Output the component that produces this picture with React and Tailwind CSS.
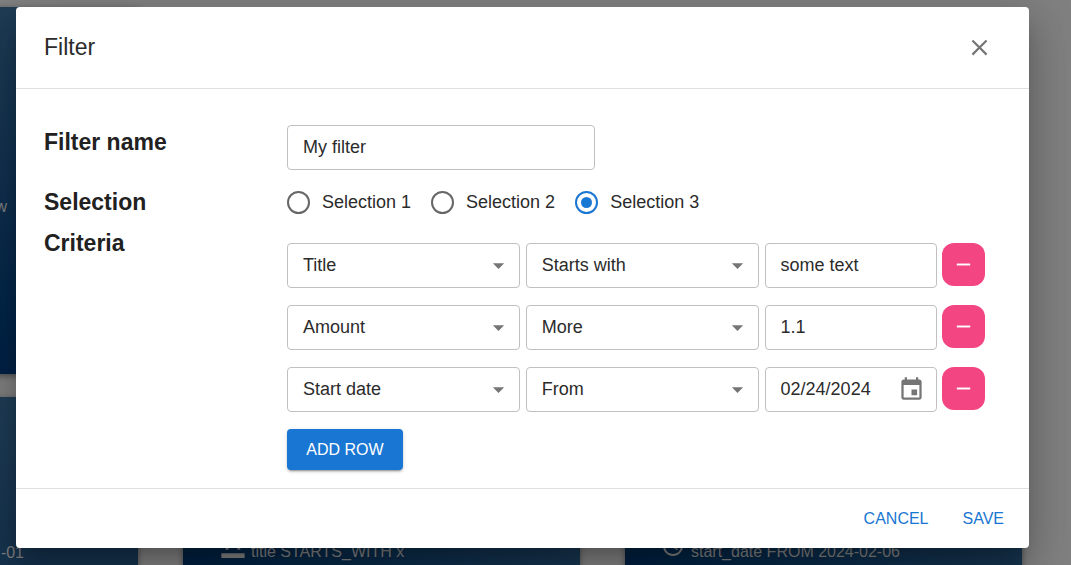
import React from "react";

const FIELD = "h-[45px] w-full rounded border border-[#c0c0c0] bg-white text-lg text-[#2b2b2b] outline-none";
const CARD = "w-[397px] shrink-0 bg-linear-to-tr from-[#001f3f] from-25% to-[#213f57] shadow-[0_2px_6px_rgba(0,0,0,0.4)]";
const SIDE_CARD = "flex w-[397px] shrink-0 justify-end bg-linear-to-b from-[#1f3d56] shadow-[0_2px_6px_rgba(0,0,0,0.4)]";

function ClockIcon() {
  return (
    <svg className="size-6" viewBox="0 0 24 24" fill="currentColor" aria-hidden="true">
      <path d="M11.99 2C6.47 2 2 6.48 2 12s4.47 10 9.99 10C17.52 22 22 17.52 22 12S17.52 2 11.99 2zM12 20c-4.42 0-8-3.58-8-8s3.58-8 8-8 8 3.58 8 8-3.58 8-8 8zm.5-13H11v6l5.25 3.15.75-1.23-4.5-2.67z" />
    </svg>
  );
}

function TextColorIcon() {
  return (
    <svg className="size-7" viewBox="0 0 24 24" fill="currentColor" aria-hidden="true">
      <path d="M2 20h20v4H2v-4zM5.49 17h2.42l1.27-3.58h5.65L16.09 17h2.42L13.25 3h-2.5L5.49 17zm4.42-5.61 2.03-5.79h.12l2.03 5.79H9.91z" />
    </svg>
  );
}

function Dashboard() {
  return (
    <div aria-hidden="true" className="-ml-[259px] flex flex-col gap-[23px] pt-[7px] text-base text-[#808080]">
      <div className="flex h-[367px] gap-[45px]">
        <div className={`${SIDE_CARD} to-[#002146] pt-[188px] pr-[131px]`}>w</div>
      </div>
      <div className="flex h-[367px] gap-[45px]">
        <div className={`${SIDE_CARD} to-[#0a2644] pt-[144px] pr-[114px]`}>-01</div>
        <div className={CARD}>
          <div className="flex items-start gap-1 pt-[133px] pl-9">
            <TextColorIcon />
            <span className="pt-3 leading-5">title STARTS_WITH x</span>
          </div>
        </div>
        <div className={CARD}>
          <div className="flex items-start gap-1.5 pt-[137px] pl-9">
            <ClockIcon />
            <span className="pt-2 leading-5">start_date FROM 2024-02-06</span>
          </div>
        </div>
      </div>
    </div>
  );
}

function SelectField({ label, value, options }) {
  return (
    <div className="grid items-center">
      <select
        aria-label={label}
        defaultValue={value}
        className={`${FIELD} col-start-1 row-start-1 appearance-none pr-9 pb-0.5 pl-[15px]`}
      >
        {options.map((o) => (
          <option key={o}>{o}</option>
        ))}
      </select>
      <svg
        className="pointer-events-none col-start-1 row-start-1 mr-2 size-[27px] justify-self-end text-[#757575]"
        viewBox="0 0 24 24"
        fill="currentColor"
        aria-hidden="true"
      >
        <path d="M7 10l5 5 5-5z" />
      </svg>
    </div>
  );
}

const ROWS = [
  { field: "Title", op: "Starts with", value: "some text" },
  { field: "Amount", op: "More", value: "1.1" },
  { field: "Start date", op: "From", value: "02/24/2024", date: true },
];

function CriteriaRow({ row }) {
  return (
    <div className="flex gap-[5px]">
      <div className="grid flex-1 grid-cols-[27fr_27fr_20fr] gap-1.5">
        <SelectField label="Field" value={row.field} options={["Title", "Amount", "Start date"]} />
        <SelectField label="Condition" value={row.op} options={["Starts with", "More", "From"]} />
        <div className="grid items-center">
          <input
            aria-label="Value"
            defaultValue={row.value}
            className={`${FIELD} col-start-1 row-start-1 px-[15px]`}
          />
          {row.date && (
            <button
              type="button"
              aria-label="Choose date"
              className="col-start-1 row-start-1 mr-3 justify-self-end text-[#757575]"
            >
              <svg className="size-[27px]" viewBox="0 0 24 24" fill="currentColor" aria-hidden="true">
                <path d="M17 12h-5v5h5v-5zM16 1v2H8V1H6v2H5c-1.11 0-1.99.9-1.99 2L3 19c0 1.1.89 2 2 2h14c1.1 0 2-.9 2-2V5c0-1.1-.9-2-2-2h-1V1h-2zm3 18H5V8h14v11z" />
              </svg>
            </button>
          )}
        </div>
      </div>
      <button
        type="button"
        aria-label="Remove row"
        className="flex size-[43px] items-center justify-center rounded-xl bg-[#f44583] text-white"
      >
        <svg className="size-[23px]" viewBox="0 0 24 24" fill="currentColor" aria-hidden="true">
          <path d="M19 13H5v-2h14v2z" />
        </svg>
      </button>
    </div>
  );
}

function RadioOption({ label, checked }) {
  return (
    <label className="flex items-center gap-3 text-lg leading-6 text-[#2b2b2b]">
      <span className="grid place-items-center">
        <input
          type="radio"
          name="selection"
          defaultChecked={checked}
          className="peer col-start-1 row-start-1 size-[23px] appearance-none rounded-full border-2 border-[#666666] checked:border-[#1976d2]"
        />
        <span className="pointer-events-none col-start-1 row-start-1 size-[11px] rounded-full peer-checked:bg-[#1976d2]" />
      </span>
      {label}
    </label>
  );
}

function FilterDialog() {
  return (
    <form
      role="dialog"
      aria-labelledby="dialog-title"
      onSubmit={(e) => e.preventDefault()}
      className="w-full rounded bg-white text-[#212121] shadow-[0_11px_15px_-7px_rgba(0,0,0,0.2),0_24px_38px_3px_rgba(0,0,0,0.14),0_9px_46px_8px_rgba(0,0,0,0.12)]"
    >
      <header className="flex h-[82px] items-center justify-between border-b border-[#e0e0e0] pr-9 pl-7">
        <h1 id="dialog-title" className="pb-0.5 text-[23px] leading-8 text-[#2b2b2b]">Filter</h1>
        <button type="button" aria-label="Close" className="text-[#757575]">
          <svg className="size-[27px]" viewBox="0 0 24 24" fill="currentColor" aria-hidden="true">
            <path d="M19 6.41L17.59 5 12 10.59 6.41 5 5 6.41 10.59 12 5 17.59 6.41 19 12 13.41 17.59 19 19 17.59 13.41 12 19 6.41z" />
          </svg>
        </button>
      </header>

      <div className="grid grid-cols-[243px_1fr] pt-9 pr-11 pb-[18px] pl-7">
        <label htmlFor="filter-name" className="pt-px text-[23px] leading-8 font-bold">Filter name</label>
        <input id="filter-name" defaultValue="My filter" className={`${FIELD} max-w-[308px] px-[15px]`} />

        <h2 className="pt-4 text-[23px] leading-8 font-bold">Selection</h2>
        <div role="radiogroup" aria-label="Selection" className="flex items-center gap-5 pt-4">
          <RadioOption label="Selection 1" />
          <RadioOption label="Selection 2" />
          <RadioOption label="Selection 3" checked />
        </div>

        <h2 className="pt-[9px] text-[23px] leading-8 font-bold">Criteria</h2>
        <div className="flex flex-col items-stretch gap-[17px] pt-[25px]">
          {ROWS.map((row) => (
            <CriteriaRow key={row.field} row={row} />
          ))}
          <button
            type="button"
            className="h-[41px] w-[116px] self-start rounded bg-[#1976d2] text-base text-white shadow-[0_3px_1px_-2px_rgba(0,0,0,0.2),0_2px_2px_0_rgba(0,0,0,0.14),0_1px_5px_0_rgba(0,0,0,0.12)]"
          >
            ADD ROW
          </button>
        </div>
      </div>

      <footer className="flex h-[60px] items-center justify-end gap-[18px] border-t border-[#e0e0e0] pr-[17px] text-base text-[#1976d2]">
        <button type="button" className="px-2 py-1">CANCEL</button>
        <button type="submit" className="px-2 py-1">SAVE</button>
      </footer>
    </form>
  );
}

export default function App() {
  return (
    <div className="relative h-screen overflow-hidden bg-[#808080] font-['Liberation_Sans',Arial,sans-serif]">
      <Dashboard />
      <div className="absolute inset-0 flex items-start pt-[7px] pr-[42px] pl-4">
        <FilterDialog />
      </div>
    </div>
  );
}
